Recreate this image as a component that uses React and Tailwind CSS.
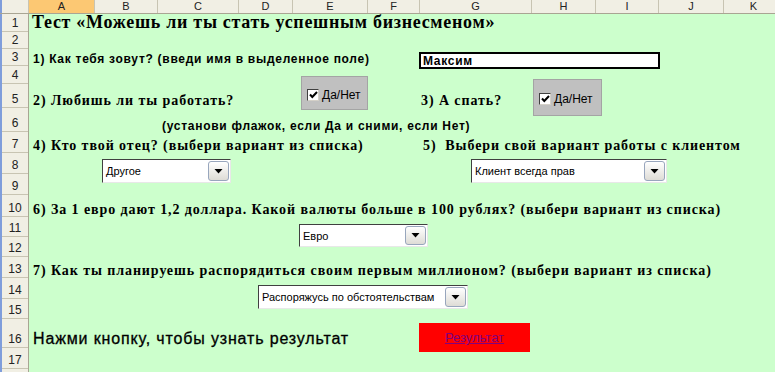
import React from 'react';

const colHeads = [
  ['A', 'w-[66px]'],
  ['B', 'w-[63px]'],
  ['C', 'w-[81px]'],
  ['D', 'w-[54px]'],
  ['E', 'w-[75px]'],
  ['F', 'w-[52px]'],
  ['G', 'w-[112px]'],
  ['H', 'w-[64px]'],
  ['I', 'w-[63px]'],
  ['J', 'w-[65px]'],
  ['K', 'w-[60px]'],
];

const rowHeads = [
  'h-[18px]', 'h-[17px]', 'h-[17px]', 'h-[18px]', 'h-[24px]', 'h-[24px]',
  'h-[21px]', 'h-[21px]', 'h-[21px]', 'h-[22px]', 'h-[20px]', 'h-[20px]',
  'h-[21px]', 'h-[21px]', 'h-[20px]', 'h-[29px]', 'h-[21px]',
];

const serifB = "font-['Liberation_Serif',serif] font-bold text-[14px] tracking-[0.92px] text-black whitespace-nowrap leading-none";
const sansB = "font-['Liberation_Sans',sans-serif] font-bold text-[12px] tracking-[0.72px] text-black whitespace-nowrap leading-none";

function Check() {
  return (
    <div className="w-[12px] h-[12px] bg-white border border-t-[#404040] border-l-[#404040] border-r-[#d4d0c8] border-b-[#d4d0c8] flex items-center justify-center shrink-0">
      <svg width="9" height="8" viewBox="0 0 9 8">
        <path d="M1 3.5 L3.3 6 L8 1" fill="none" stroke="black" strokeWidth="2" />
      </svg>
    </div>
  );
}

function CheckBox({ className }) {
  return (
    <div className={"bg-[#c0c0c0] border border-[#a4a4a4] flex items-center gap-[3px] pl-[5px] pt-[3px] " + className}>
      <Check />
      <span className="font-['Liberation_Sans',sans-serif] text-[12px] text-black leading-none">Да/Нет</span>
    </div>
  );
}

function Combo({ text, className }) {
  return (
    <div className={"flex items-stretch bg-white border-t border-l border-t-[#404040] border-l-[#404040] border-r border-b border-r-[#e8e8e8] border-b-[#e8e8e8] " + className}>
      <div className="flex-1 flex items-center pl-[3px] pt-[1px] text-[11px] font-['Liberation_Sans',sans-serif] text-black whitespace-nowrap overflow-hidden">
        {text}
      </div>
      <div className="w-[21px] my-[1px] mr-[1px] rounded-[3px] border border-[#98a6bd] bg-linear-to-b from-white to-[#dedcd6] flex items-center justify-center">
        <svg width="9" height="5" viewBox="0 0 9 5">
          <path d="M0.5 0 H8.5 L4.5 4.5 Z" fill="black" />
        </svg>
      </div>
    </div>
  );
}

export default function App() {
  return (
    <div className="w-[775px] h-[372px] overflow-hidden bg-[#ccffcc] flex flex-col">
      {/* column header */}
      <div className="flex h-[14px] shrink-0 bg-[#f1efe4] border-b border-[#a9a593] font-['Liberation_Sans',sans-serif] text-[11px] text-[#222] leading-none">
        <div className="w-[29px] shrink-0 border-r border-[#c8c4b2] border-l-2 border-l-[#7f9ddb]" />
        {colHeads.map(([l, w], i) => (
          <div
            key={l}
            className={
              w +
              ' shrink-0 flex items-center justify-center border-r border-[#c8c4b2] ' +
              (i === 0 ? 'bg-[#fcc873]' : '')
            }
          >
            {l}
          </div>
        ))}
      </div>

      <div className="flex flex-1 min-h-0">
        {/* row header */}
        <div className="w-[29px] shrink-0 flex flex-col bg-[#f1efe4] border-r border-[#a9a593] border-l-2 border-l-[#7f9ddb] font-['Liberation_Sans',sans-serif] text-[12px] text-[#222] leading-none">
          {rowHeads.map((h, i) => (
            <div key={i} className={h + ' shrink-0 flex items-end justify-center pb-[2px] border-b border-[#c8c4b2]'}>
              {i + 1}
            </div>
          ))}
          <div className="flex-1" />
        </div>

        {/* sheet */}
        <div className="flex-1 grid grid-cols-[66px_63px_81px_54px_75px_52px_112px_64px_63px_65px_60px] grid-rows-[18px_17px_17px_18px_24px_24px_21px_21px_21px_22px_20px_20px_21px_21px_20px_29px_21px_3px]">
          {/* row 1 */}
          <div className="col-start-1 col-end-12 row-start-1 self-end pl-[3px] pb-[1px] font-['Liberation_Serif',serif] font-bold text-[18px] tracking-[0.7px] text-black whitespace-nowrap leading-none">
            Тест «Можешь ли ты стать успешным бизнесменом»
          </div>

          {/* row 3 */}
          <div className={'col-start-1 col-end-7 row-start-3 self-end pl-[4px] pb-[1px] ' + sansB}>
            1) Как тебя зовут? (введи имя в выделенное поле)
          </div>
          <div className="col-start-7 col-end-10 row-start-3 row-span-2 self-start justify-self-start ml-[-1px] mt-[3px] w-[241px] h-[17px] bg-white border-2 border-black flex items-center pl-[2px]">
            <span className={sansB + ' tracking-[0.3px]'}>Максим</span>
          </div>

          {/* row 5 */}
          <div className={'col-start-1 col-end-5 row-start-5 self-end pl-[4px] pb-0 ' + serifB}>
            2) Любишь ли ты работать?
          </div>
          <CheckBox className="col-start-5 col-end-8 row-start-4 row-span-3 self-start justify-self-start ml-[8px] mt-[10px] w-[67px] h-[34px]" />
          <div className={'col-start-7 col-end-9 row-start-5 self-end pl-[1px] pb-0 ' + serifB}>
            3) А спать?
          </div>
          <CheckBox className="col-start-8 col-end-11 row-start-4 row-span-3 self-start justify-self-start ml-[1px] mt-[13px] w-[69px] h-[37px]" />

          {/* row 6 */}
          <div className={'col-start-3 col-end-12 row-start-6 self-end pl-[4px] pb-0 ' + sansB}>
            (установи флажок, если Да и сними, если Нет)
          </div>

          {/* row 7 */}
          <div className={'col-start-1 col-end-7 row-start-7 self-end pl-[4px] pb-0 ' + serifB}>
            4) Кто твой отец? (выбери вариант из списка)
          </div>
          <div className={'col-start-7 col-end-12 row-start-7 self-end pl-[3px] pb-0 whitespace-pre ' + serifB}>
            {'5)  Выбери свой вариант работы с клиентом'}
          </div>

          {/* row 8 */}
          <Combo text="Другое" className="col-start-2 col-end-6 row-start-8 row-span-2 self-start justify-self-start ml-[7px] mt-[6px] w-[129px] h-[24px]" />
          <Combo text="Клиент всегда прав" className="col-start-7 col-end-10 row-start-8 row-span-2 self-start justify-self-start ml-[51px] mt-[6px] w-[196px] h-[24px]" />

          {/* row 10 */}
          <div className={'col-start-1 col-end-12 row-start-10 self-end pl-[4px] pb-0 ' + serifB}>
            6) За 1 евро дают 1,2 доллара. Какой валюты больше в 100 рублях? (выбери вариант из списка)
          </div>
          <Combo text="Евро" className="col-start-5 col-end-8 row-start-11 row-span-2 self-start justify-self-start ml-[6px] mt-[7px] w-[129px] h-[23px]" />

          {/* row 13 */}
          <div className={'col-start-1 col-end-12 row-start-13 self-end pl-[4px] pb-0 ' + serifB}>
            7) Как ты планируешь распорядиться своим первым миллионом? (выбери вариант из списка)
          </div>
          <Combo text="Распоряжусь по обстоятельствам" className="col-start-4 col-end-8 row-start-14 row-span-2 self-start justify-self-start ml-[19px] mt-[7px] w-[210px] h-[24px]" />

          {/* row 16 */}
          <div className="col-start-1 col-end-7 row-start-16 self-end pl-[4px] pb-[1px] font-['Liberation_Sans',sans-serif] text-[16px] tracking-[0.85px] text-black whitespace-nowrap leading-none [-webkit-text-stroke:0.3px_black]">
            Нажми кнопку, чтобы узнать результат
          </div>
          <div className="col-start-7 col-end-9 row-start-16 row-span-2 self-start justify-self-start ml-[-1px] mt-[4px] w-[111px] h-[29px] bg-[#ff0000] flex items-center justify-center">
            <span className="font-['Liberation_Sans',sans-serif] text-[13px] text-[#800080] underline leading-none">
              Результат
            </span>
          </div>
        </div>
      </div>
    </div>
  );
}
